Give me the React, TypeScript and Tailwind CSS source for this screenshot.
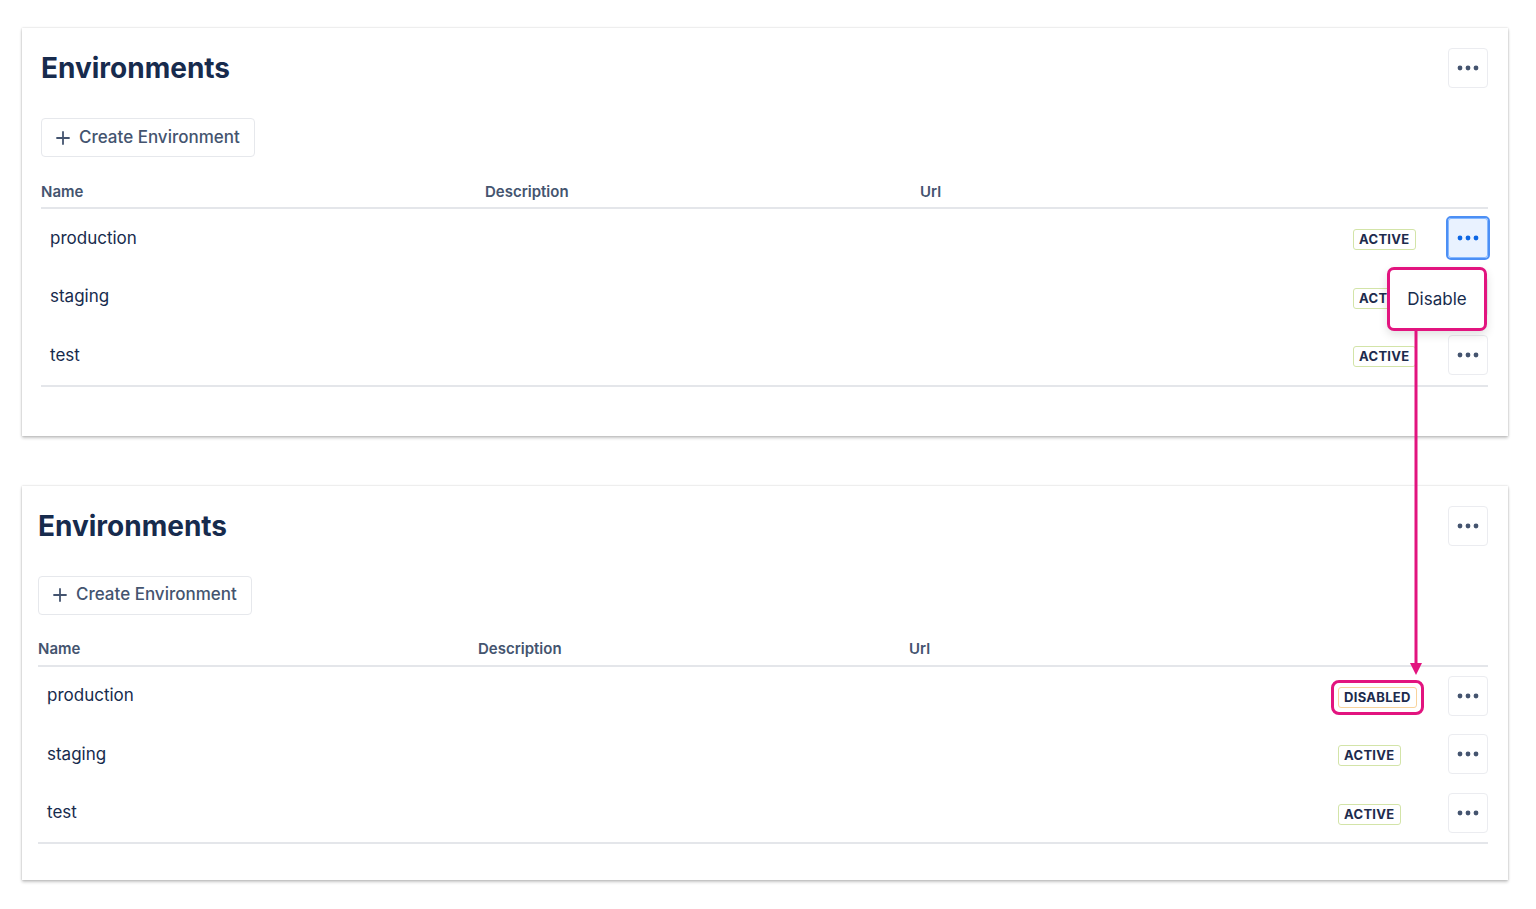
import React from "react";

type Status = "ACTIVE" | "DISABLED";

interface Env {
  name: string;
  status: Status;
  focused?: boolean;
  menu?: boolean;
  marked?: boolean;
}

interface PanelProps {
  envs: Env[];
  padX: string;
  padB: string;
  cols: string;
  statusW: string;
}

const font = { fontFamily: "Inter, 'Open Sans', sans-serif" };

const Dots: React.FC<{ color: string }> = ({ color }) => (
  <svg width="22" height="6" viewBox="0 0 22 6">
    <circle cx="3" cy="3" r="2.4" fill={color} />
    <circle cx="11" cy="3" r="2.4" fill={color} />
    <circle cx="19" cy="3" r="2.4" fill={color} />
  </svg>
);

const MoreButton: React.FC<{ focused?: boolean }> = ({ focused }) =>
  focused ? (
    <div className="relative flex h-[40px] w-[40px] items-center justify-center rounded-[3px] border border-[#85b8ff] bg-[#e9f2ff]">
      <div className="absolute -inset-[3px] rounded-[5px] border-2 border-[#4c8ff5]" />
      <Dots color="#0c66e4" />
    </div>
  ) : (
    <div className="flex h-[40px] w-[40px] items-center justify-center rounded-[4px] border border-[#ebecf0] bg-white">
      <Dots color="#44546f" />
    </div>
  );

const Badge: React.FC<{ status: Status; marked?: boolean }> = ({ status, marked }) => (
  <div className="relative inline-flex">
    <span
      className={
        status === "ACTIVE"
          ? "rounded-[3px] border border-[#d3e4a8] px-[5px] py-[1px] text-[13px] font-bold leading-[17px] tracking-[0.3px] text-[#1d2b4d]"
          : "rounded-[3px] border border-[#f8d39c] px-[5px] py-[1px] text-[13px] font-bold leading-[17px] tracking-[0.3px] text-[#1d2b4d]"
      }
    >
      {status}
    </span>
    {marked && (
      <div className="absolute -inset-x-[7px] -inset-y-[7px] rounded-[8px] border-[3px] border-[#e2147f]" />
    )}
  </div>
);

const Panel: React.FC<PanelProps> = ({ envs, padX, padB, cols, statusW }) => (
  <section
    className={`bg-white pt-[20px] shadow-[0_2px_3px_rgba(0,0,0,0.22),0_0_2px_rgba(0,0,0,0.18)] ${padX} ${padB}`}
  >
    <div className="flex h-[40px] items-center justify-between">
      <h1 className="text-[28px] font-bold leading-none text-[#172b4d]">Environments</h1>
      <MoreButton />
    </div>

    <button className="mt-[30px] flex h-[39px] items-center gap-[9px] rounded-[4px] border border-[#e6e8ec] bg-white pl-[14px] pr-[14px] text-[17px] font-medium text-[#44546f]">
      <svg width="14" height="14" viewBox="0 0 14 14">
        <path d="M7 1v12M1 7h12" stroke="#44546f" strokeWidth="1.8" strokeLinecap="round" />
      </svg>
      Create Environment
    </button>

    <div className="mt-[20px]">
      <div className={`grid h-[32px] items-center border-b-2 border-[#e4e6ea] text-[15px] font-semibold text-[#44546f] ${cols}`}>
        <span>Name</span>
        <span>Description</span>
        <span>Url</span>
      </div>
      <div className="border-b-2 border-[#e4e6ea]">
        {envs.map((env) => (
          <div key={env.name} className="flex h-[58.5px] items-center">
            <div className={`grid flex-1 items-center text-[17px] text-[#172b4d] ${cols}`}>
              <span className="pl-[9px]">{env.name}</span>
              <span />
              <span />
            </div>
            <div className={statusW}>
              <Badge status={env.status} marked={env.marked} />
            </div>
            <div className="relative">
              <MoreButton focused={env.focused} />
              {env.menu && (
                <div className="absolute right-[1px] top-[49px] z-10 flex h-[64px] w-[100px] items-center justify-center rounded-[7px] border-[3px] border-[#e2147f] bg-white text-[17px] text-[#172b4d] shadow-[0_4px_10px_rgba(0,0,0,0.12)]">
                  Disable
                </div>
              )}
            </div>
          </div>
        ))}
      </div>
    </div>
  </section>
);

export default function App() {
  return (
    <div className="relative min-h-[909px] w-[1536px] bg-white" style={font}>
      <div className="flex flex-col gap-[50px] pl-[22px] pr-[28px] pt-[28px]">
        <Panel
          padX="pl-[19px] pr-[20px]"
          padB="pb-[49px]"
          cols="grid-cols-[444px_435px_1fr]"
          statusW="w-[95px]"
          envs={[
            { name: "production", status: "ACTIVE", focused: true, menu: true },
            { name: "staging", status: "ACTIVE" },
            { name: "test", status: "ACTIVE" },
          ]}
        />
        <Panel
          padX="pl-[16px] pr-[20px]"
          padB="pb-[36px]"
          cols="grid-cols-[440px_431px_1fr]"
          statusW="w-[110px]"
          envs={[
            { name: "production", status: "DISABLED", marked: true },
            { name: "staging", status: "ACTIVE" },
            { name: "test", status: "ACTIVE" },
          ]}
        />
      </div>

      {/* connector from the Disable menu down to the new status */}
      <svg className="pointer-events-none absolute left-[1408px] top-[331px] z-20" width="16" height="346" viewBox="0 0 16 346">
        <path d="M8 0V334" stroke="#e2147f" strokeWidth="3" />
        <path d="M2 332L8 344L14 332Z" fill="#e2147f" />
      </svg>
    </div>
  );
}
